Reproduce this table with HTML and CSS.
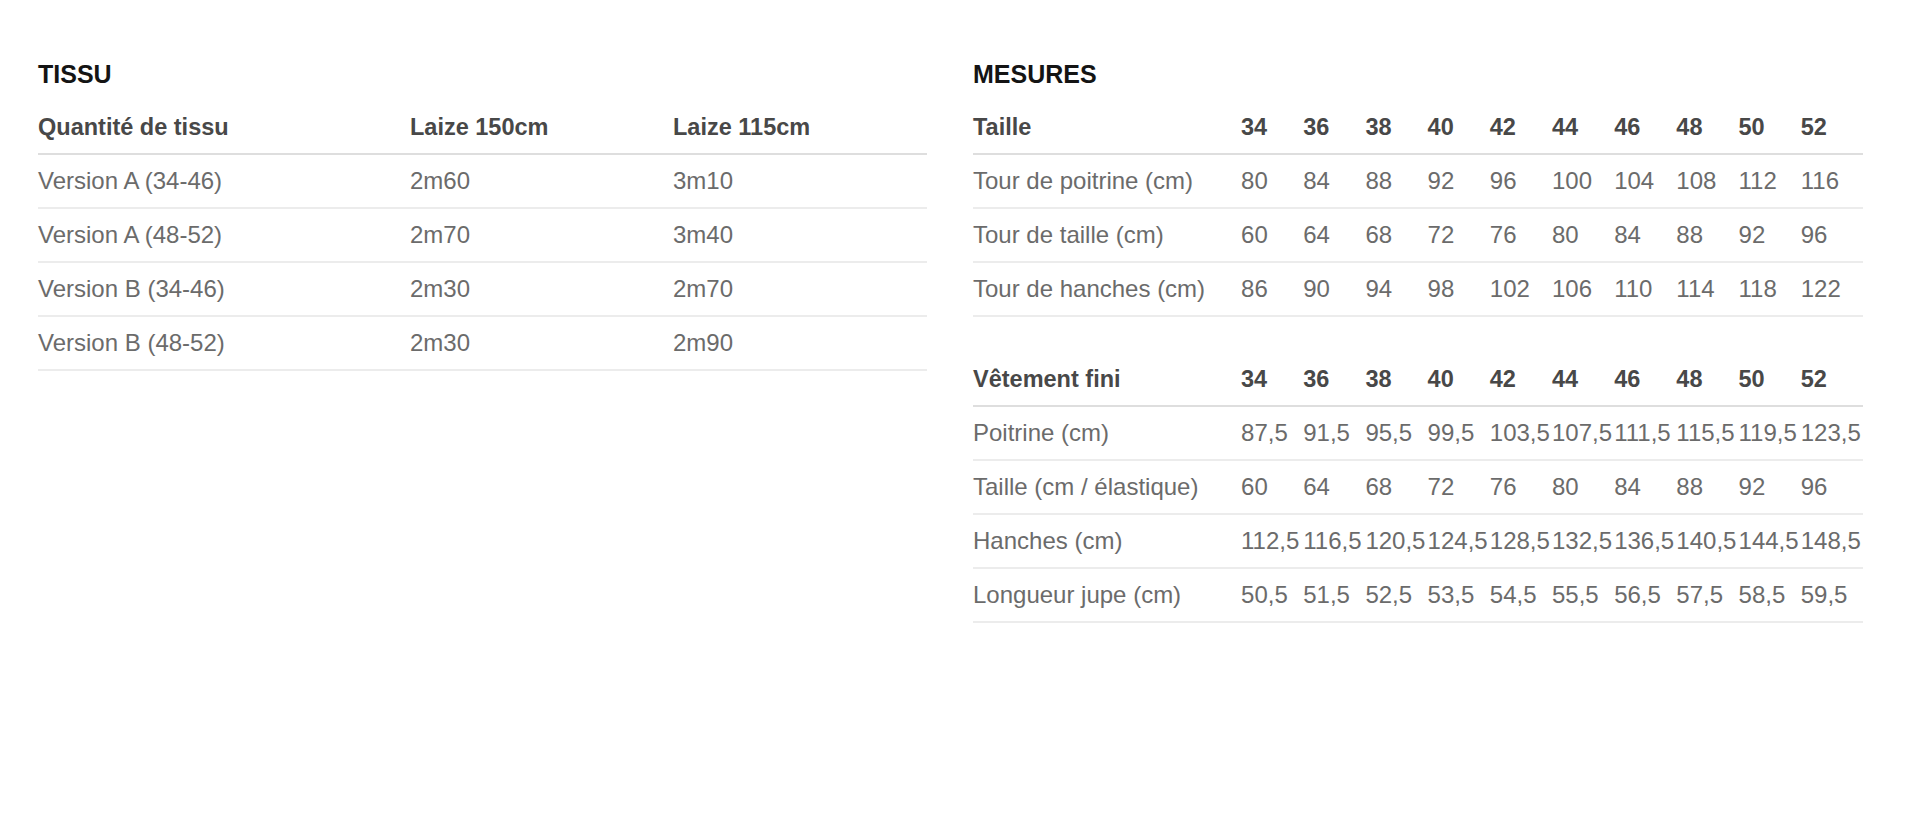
FILE: index.html
```html
<!DOCTYPE html>
<html lang="fr">
<head>
<meta charset="utf-8">
<title>Tissu et mesures</title>
<link rel="stylesheet" href="styles.css">
</head>
<body>
<main class="page">
  <section class="block">
    <h2 class="title">TISSU</h2>
    <table class="tbl tbl-tissu">
      <colgroup><col class="c-a"><col class="c-b"><col class="c-c"></colgroup>
      <thead>
        <tr><th>Quantité de tissu</th><th>Laize 150cm</th><th>Laize 115cm</th></tr>
      </thead>
      <tbody>
        <tr><td>Version A (34-46)</td><td>2m60</td><td>3m10</td></tr>
        <tr><td>Version A (48-52)</td><td>2m70</td><td>3m40</td></tr>
        <tr><td>Version B (34-46)</td><td>2m30</td><td>2m70</td></tr>
        <tr><td>Version B (48-52)</td><td>2m30</td><td>2m90</td></tr>
      </tbody>
    </table>
  </section>
  <section class="block">
    <h2 class="title">MESURES</h2>
    <table class="tbl tbl-mes">
      <colgroup><col class="c-label"><col span="10" class="c-num"></colgroup>
      <thead>
        <tr><th>Taille</th><th>34</th><th>36</th><th>38</th><th>40</th><th>42</th><th>44</th><th>46</th><th>48</th><th>50</th><th>52</th></tr>
      </thead>
      <tbody>
        <tr><td>Tour de poitrine (cm)</td><td>80</td><td>84</td><td>88</td><td>92</td><td>96</td><td>100</td><td>104</td><td>108</td><td>112</td><td>116</td></tr>
        <tr><td>Tour de taille (cm)</td><td>60</td><td>64</td><td>68</td><td>72</td><td>76</td><td>80</td><td>84</td><td>88</td><td>92</td><td>96</td></tr>
        <tr><td>Tour de hanches (cm)</td><td>86</td><td>90</td><td>94</td><td>98</td><td>102</td><td>106</td><td>110</td><td>114</td><td>118</td><td>122</td></tr>
      </tbody>
    </table>
    <table class="tbl tbl-mes tbl-second">
      <colgroup><col class="c-label"><col span="10" class="c-num"></colgroup>
      <thead>
        <tr><th>Vêtement fini</th><th>34</th><th>36</th><th>38</th><th>40</th><th>42</th><th>44</th><th>46</th><th>48</th><th>50</th><th>52</th></tr>
      </thead>
      <tbody>
        <tr><td>Poitrine (cm)</td><td>87,5</td><td>91,5</td><td>95,5</td><td>99,5</td><td>103,5</td><td>107,5</td><td>111,5</td><td>115,5</td><td>119,5</td><td>123,5</td></tr>
        <tr><td>Taille (cm / élastique)</td><td>60</td><td>64</td><td>68</td><td>72</td><td>76</td><td>80</td><td>84</td><td>88</td><td>92</td><td>96</td></tr>
        <tr><td>Hanches (cm)</td><td>112,5</td><td>116,5</td><td>120,5</td><td>124,5</td><td>128,5</td><td>132,5</td><td>136,5</td><td>140,5</td><td>144,5</td><td>148,5</td></tr>
        <tr><td>Longueur jupe (cm)</td><td>50,5</td><td>51,5</td><td>52,5</td><td>53,5</td><td>54,5</td><td>55,5</td><td>56,5</td><td>57,5</td><td>58,5</td><td>59,5</td></tr>
      </tbody>
    </table>
  </section>
</main>
</body>
</html>
```

FILE: styles.css
```css
html, body {
  margin: 0;
  padding: 0;
  background: #ffffff;
}

body {
  font-family: "Liberation Sans", Arial, sans-serif;
  color: #6b6b6b;
}

.page {
  display: grid;
  grid-template-columns: 889px 890px;
  column-gap: 46px;
  padding: 59px 0 0 38px;
  align-items: start;
}

.title {
  margin: 0 0 12px 0;
  font-size: 25px;
  line-height: 30px;
  font-weight: 700;
  color: #141414;
}

.tbl {
  width: 100%;
  table-layout: fixed;
  border-collapse: collapse;
  border-spacing: 0;
}

.tbl th,
.tbl td {
  padding: 0;
  height: 52px;
  line-height: 52px;
  text-align: left;
  vertical-align: middle;
  white-space: nowrap;
  overflow: visible;
}

.tbl th {
  font-size: 23.5px;
  font-weight: 700;
  color: #484848;
  border-bottom: 2px solid #dedede;
}

.tbl td {
  font-size: 24px;
  font-weight: 400;
  color: #6b6b6b;
  border-bottom: 2px solid #ececec;
}

.c-a { width: 372px; }
.c-b { width: 263px; }
.c-c { width: 254px; }

.c-label { width: 268px; }
.c-num { width: 62.2px; }

.tbl-second {
  margin-top: 36px;
}
```
